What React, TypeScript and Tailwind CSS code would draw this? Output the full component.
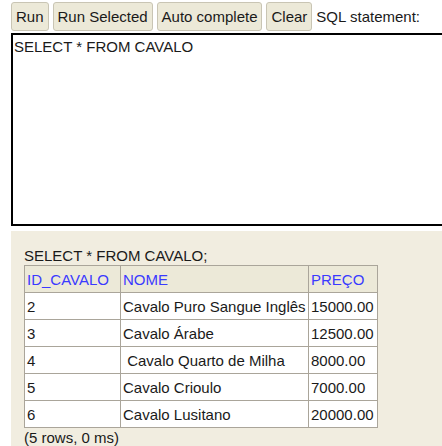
import React from 'react'

type Row = { id: string; nome: string; preco: string }

const ROWS: Row[] = [
    { id: '2', nome: 'Cavalo Puro Sangue Inglês', preco: '15000.00' },
    { id: '3', nome: 'Cavalo Árabe', preco: '12500.00' },
    { id: '4', nome: '\u00a0Cavalo Quarto de Milha', preco: '8000.00' },
    { id: '5', nome: 'Cavalo Crioulo', preco: '7000.00' },
    { id: '6', nome: 'Cavalo Lusitano', preco: '20000.00' },
]

const BUTTONS = ['Run', 'Run Selected', 'Auto complete', 'Clear']

export default function App() {
    return (
        <div
            className="h-[446px] w-[442px] overflow-hidden bg-white text-[15px] leading-[17px] text-[#1a1a1a]"
            style={{ fontFamily: '"Liberation Sans", Arial, sans-serif' }}
        >
            {/* toolbar */}
            <div className="flex h-[33px] items-start gap-[4px] pl-[11px] pt-[2px]">
                {BUTTONS.map((b) => (
                    <button
                        key={b}
                        className="h-[29px] rounded-[3px] border border-[#c9c5b4] bg-[#ece9d8] px-[4px] leading-[27px] text-[#1a1a1a]"
                    >
                        {b}
                    </button>
                ))}
                <span className="leading-[29px]">SQL statement:</span>
            </div>

            {/* editor */}
            <div className="ml-[11px] h-[193px] w-[460px] border-2 border-black bg-white px-[1px] pt-[3px]">
                SELECT * FROM CAVALO
            </div>

            {/* result */}
            <div className="ml-[11px] mt-[5px] h-[220px] bg-[#f1ede0] pl-[13px] pt-[15px]">
                <div className="leading-[19px]">SELECT * FROM CAVALO;</div>
                <table className="border-collapse">
                    <thead>
                        <tr className="h-[27px] bg-[#ece9d8] text-[#3a3aff]">
                            <th className="w-[96px] border border-[#aaa59a] px-[2px] py-0 text-left font-normal">ID_CAVALO</th>
                            <th className="w-[188px] border border-[#aaa59a] px-[2px] py-0 text-left font-normal">NOME</th>
                            <th className="w-[69px] border border-[#aaa59a] px-[2px] py-0 text-left font-normal">PREÇO</th>
                        </tr>
                    </thead>
                    <tbody>
                        {ROWS.map((r) => (
                            <tr key={r.id} className="h-[27px] bg-white">
                                <td className="border border-[#aaa59a] px-[2px] py-0">{r.id}</td>
                                <td className="whitespace-nowrap border border-[#aaa59a] px-[2px] py-0">{r.nome}</td>
                                <td className="border border-[#aaa59a] px-[2px] py-0">{r.preco}</td>
                            </tr>
                        ))}
                    </tbody>
                </table>
                <div className="leading-[19px]">(5 rows, 0 ms)</div>
            </div>
        </div>
    )
}
